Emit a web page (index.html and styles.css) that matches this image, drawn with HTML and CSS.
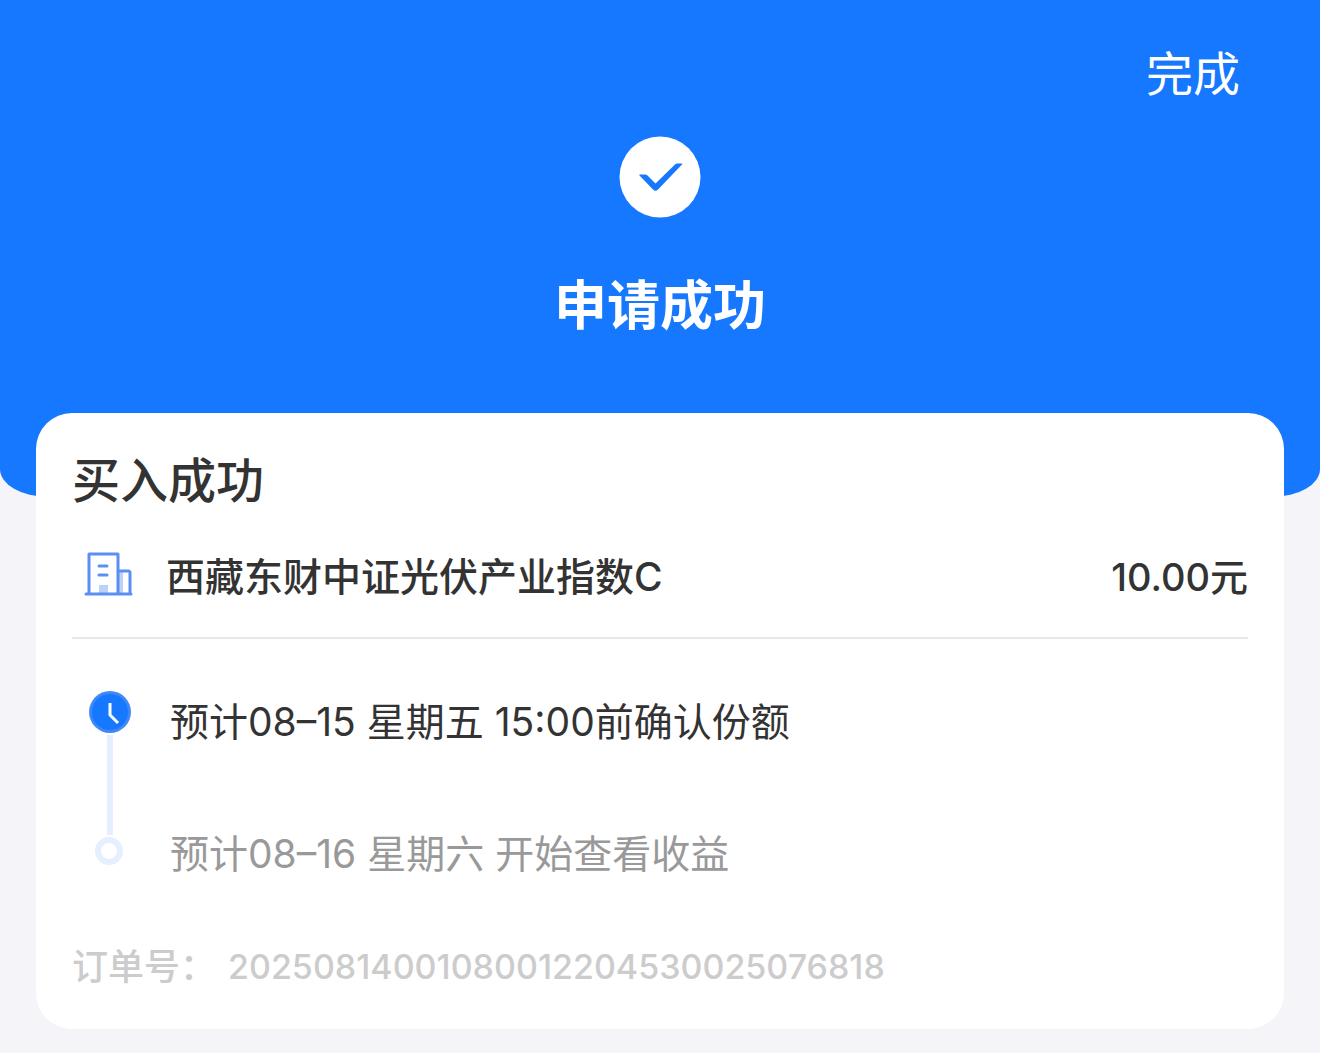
FILE: index.html
```
<!DOCTYPE html>
<html lang="zh-CN">
<head>
  <meta charset="UTF-8" />
  <meta name="viewport" content="width=device-width, initial-scale=1" />
  <title>申请成功</title>
  <link rel="stylesheet" href="styles.css">
</head>
<body>

<!-- 顶部结果 -->
<header class="result">
  <button type="button" class="done">完成</button>
  <svg class="result-icon" viewBox="0 0 82 82" aria-hidden="true">
    <circle cx="41" cy="41" r="40.500" fill="#fff"/>
    <path d="M21 38.500h5q1.500 0 2.500 1l8 8L56 28.500Q57 27.500 58.500 27.500h4q1.500 0 .5 1L39 53.500Q36.500 56 34 53.500L20.500 39.500q-.8-1 .5-1z" fill="#1677ff"/>
  </svg>
  <h1>申请成功</h1>
</header>

<!-- 订单卡片 -->
<main class="card">
  <h2>买入成功</h2>

  <div class="fund">
    <svg class="fund-icon" viewBox="0 0 50 46" aria-hidden="true">
      <path d="M15 33h9v9h-9zM35 19h4v23h-4z" fill="#bcd2fb"/>
      <g fill="none" stroke="#5b8ff0" stroke-width="3" stroke-linecap="round" stroke-linejoin="round">
        <path d="M5 42V2h29v40M34 19h11l1 1v22M2 42h45"/>
        <path d="M15 14h8M15 23h8"/>
      </g>
    </svg>
    <span class="fund-name">西藏东财中证光伏产业指数C</span>
    <span class="amount">10.00元</span>
  </div>

  <ol class="steps">
    <li class="step active">
      <svg class="dot" viewBox="0 0 42 42" aria-hidden="true">
        <circle cx="21" cy="21" r="21" fill="#4087f7"/>
        <circle cx="21" cy="21" r="18" fill="#1677ff"/>
        <path d="M21 12v12l8 8" fill="none" stroke="#fff" stroke-width="3"/>
      </svg>
      <span>预计08–15 星期五 15:00前确认份额</span>
    </li>
    <li class="step">
      <svg class="dot small" viewBox="0 0 28 28" aria-hidden="true">
        <circle cx="14" cy="14" r="11" fill="#fff" stroke="#e6efff" stroke-width="6"/>
      </svg>
      <span>预计08–16 星期六 开始查看收益</span>
    </li>
  </ol>

  <div class="order">
    <span>订单号：</span>
    <span class="order-no">20250814001080012204530025076818</span>
  </div>
</main>

</body>
</html>
```
FILE: styles.css
```
* {
  box-sizing: border-box;
}

body {
  margin: 0;
  padding-bottom: 24px;
  background: #f4f4f9;
  color: #333;
  font-family: Inter, "Noto Sans CJK SC", sans-serif;
}

h1, h2, ol {
  margin: 0;
  padding: 0;
  list-style: none;
}

.result {
  display: flex;
  flex-direction: column;
  align-items: center;
  height: 497px;
  padding: 42px 80px 0;
  background: #1677ff;
  border-radius: 0 0 48px 48px / 0 0 28px 28px;
  color: #fff;
}

.done {
  align-self: flex-end;
  padding: 0;
  border: none;
  background: none;
  color: #fff;
  font-family: inherit;
  font-size: 47px;
  line-height: 64px;
  cursor: pointer;
}

.result-icon {
  width: 82px;
  height: 82px;
  margin-top: 30px;
}

h1 {
  margin-top: 52px;
  font-size: 53px;
  line-height: 72px;
  font-weight: 700;
}

.card {
  margin: -84px 36px 0;
  padding: 34px 36px;
  background: #fff;
  border-radius: 36px;
}

h2 {
  font-size: 48px;
  line-height: 68px;
  font-weight: 500;
}

.fund {
  display: flex;
  align-items: center;
  padding: 32px 0 30px;
  border-bottom: 2px solid #e8e8e8;
  font-size: 39px;
  line-height: 60px;
  font-weight: 500;
}

.fund-icon {
  width: 50px;
  height: 46px;
  margin: 0 32px 4px 12px;
}

.amount {
  margin-left: auto;
  font-size: 38px;
}

.steps {
  padding-top: 52px;
}

.step {
  position: relative;
  display: flex;
  height: 132px;
  color: #999;
  font-size: 39px;
  line-height: 62px;
  word-spacing: normal;
}

.step.active {
  color: #333;
}

.step:last-child {
  height: 116px;
}

.step.active::after {
  content: "";
  position: absolute;
  top: 44px;
  left: 35px;
  width: 6px;
  height: 100px;
  background: #e6efff;
}

.dot {
  flex: none;
  width: 42px;
  height: 42px;
  margin: 0 39px 0 17px;
}

.dot.small {
  width: 28px;
  height: 28px;
  margin: 14px 47px 0 23px;
}

.order {
  display: flex;
  gap: 12px;
  color: #ccc;
  font-size: 36px;
  line-height: 56px;
  font-weight: 500;
}

.order-no {
  font-size: 34px;
}
```
